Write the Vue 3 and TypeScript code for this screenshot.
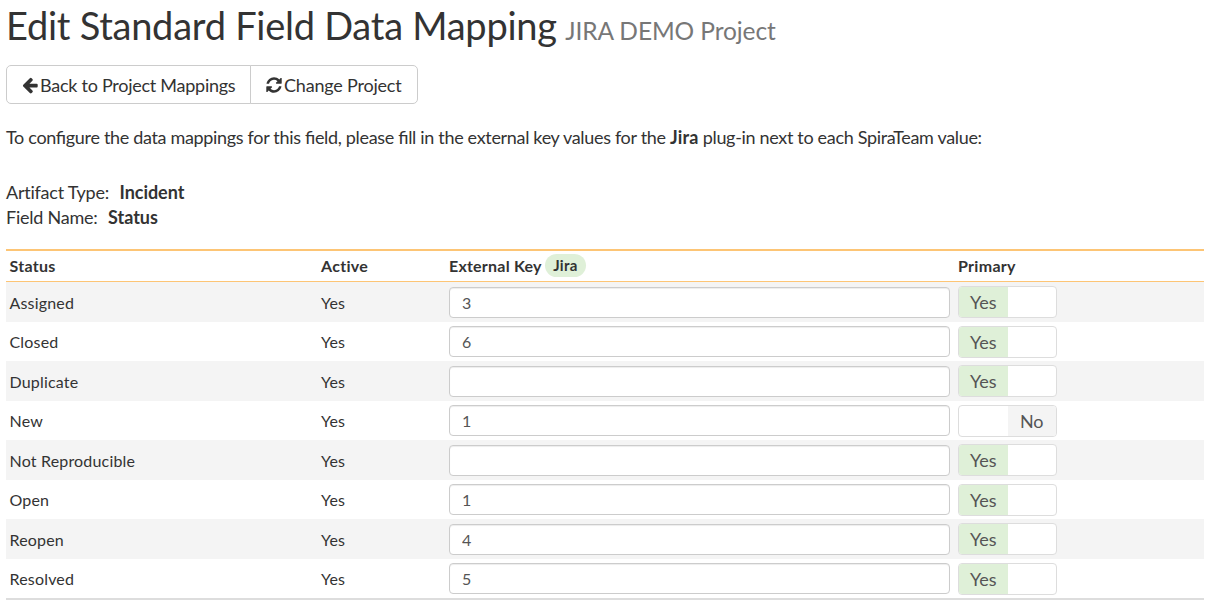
<script setup lang="ts">
import { ref } from 'vue'

interface StatusMapping {
  name: string
  active: boolean
  externalKey: string
  primary: boolean
}

const mappings = ref<StatusMapping[]>([
  { name: 'Assigned', active: true, externalKey: '3', primary: true },
  { name: 'Closed', active: true, externalKey: '6', primary: true },
  { name: 'Duplicate', active: true, externalKey: '', primary: true },
  { name: 'New', active: true, externalKey: '1', primary: false },
  { name: 'Not Reproducible', active: true, externalKey: '', primary: true },
  { name: 'Open', active: true, externalKey: '1', primary: true },
  { name: 'Reopen', active: true, externalKey: '4', primary: true },
  { name: 'Resolved', active: true, externalKey: '5', primary: true },
])
</script>

<template>
  <main class="page">
    <h1 class="title">Edit Standard Field Data Mapping <small class="project">JIRA DEMO Project</small></h1>

    <div class="toolbar">
      <button type="button" class="btn">
        <svg class="icon" viewBox="0 0 1792 1792" aria-hidden="true">
          <path d="M1664 896v128q0 53-32.5 90.5t-84.5 37.5h-704l293 294q38 36 38 90t-38 90l-75 76q-37 37-90 37-52 0-91-37l-651-652q-37-37-37-90 0-52 37-91l651-650q38-38 91-38 52 0 90 38l75 74q38 38 38 91t-38 91l-293 293h704q52 0 84.5 37.5t32.5 90.5z" />
        </svg>
        <span>Back to Project Mappings</span>
      </button>
      <button type="button" class="btn">
        <svg class="icon" viewBox="0 0 1792 1792" aria-hidden="true">
          <path d="M1639 1056q0 5-1 7-64 268-268 434.5t-478 166.5q-146 0-282.5-55t-243.5-157l-129 129q-19 19-45 19t-45-19-19-45v-448q0-26 19-45t45-19h448q26 0 45 19t19 45-19 45l-137 137q71 66 161 102t187 36q134 0 250-65t186-179q11-17 53-117 8-23 30-23h192q13 0 22.5 9.5t9.5 22.5zm25-800v448q0 26-19 45t-45 19h-448q-26 0-45-19t-19-45 19-45l138-138q-148-137-349-137-134 0-250 65t-186 179q-11 17-53 117-8 23-30 23h-199q-13 0-22.5-9.5t-9.5-22.5v-7q65-268 270-434.5t480-166.5q146 0 284 55.5t245 156.5l130-129q19-19 45-19t45 19 19 45z" />
        </svg>
        <span>Change Project</span>
      </button>
    </div>

    <p class="intro">To configure the data mappings for this field, please fill in the external key values for the <b>Jira</b> plug-in next to each SpiraTeam value:</p>

    <div class="meta">
      <div class="meta-row"><span>Artifact Type:</span><b>Incident</b></div>
      <div class="meta-row"><span>Field Name:</span><b>Status</b></div>
    </div>

    <section class="grid">
      <div class="row head">
        <div>Status</div>
        <div>Active</div>
        <div class="key-head"><span>External Key</span><span class="badge">Jira</span></div>
        <div>Primary</div>
      </div>
      <div v-for="item in mappings" :key="item.name" class="row">
        <div>{{ item.name }}</div>
        <div>{{ item.active ? 'Yes' : 'No' }}</div>
        <div><input v-model="item.externalKey" class="field" type="text" /></div>
        <div>
          <button type="button" class="toggle" @click="item.primary = !item.primary">
            <span class="half" :class="{ yes: item.primary }">{{ item.primary ? 'Yes' : '' }}</span>
            <span class="half" :class="{ no: !item.primary }">{{ item.primary ? '' : 'No' }}</span>
          </button>
        </div>
      </div>
    </section>
  </main>
</template>

<style>
body {
  margin: 0;
  background: #fff;
}
</style>

<style scoped>
.page {
  box-sizing: border-box;
  height: 609px;
  padding: 4px 10px 0 6px;
  overflow: hidden;
  font-family: Lato, 'Open Sans', sans-serif;
  font-size: 18px;
  line-height: 25px;
  color: #333;
}
.title {
  margin: 0;
  height: 43px;
  font-size: 38px;
  line-height: 43px;
  font-weight: 400;
  letter-spacing: -0.25px;
  white-space: nowrap;
}
.project {
  font-size: 24.5px;
  line-height: 1;
  letter-spacing: -0.1px;
  margin-left: -1px;
  color: #777;
}
.toolbar {
  display: flex;
  margin-top: 18px;
}
.btn {
  box-sizing: border-box;
  display: flex;
  align-items: center;
  height: 39px;
  padding: 1px 13.5px 0;
  border: 1px solid #ccc;
  background: #fff;
  color: #333;
  font: inherit;
  letter-spacing: -0.26px;
  white-space: nowrap;
}
.btn:first-child {
  width: 245px;
  border-radius: 5px 0 0 5px;
}
.btn:last-child {
  width: 168px;
  margin-left: -1px;
  border-radius: 0 5px 5px 0;
  letter-spacing: -0.2px;
}
.icon {
  flex: none;
  width: 18px;
  height: 18px;
  margin-right: 1.5px;
  fill: #333;
}
.intro {
  margin: 21px 0 0;
  letter-spacing: -0.325px;
  font-feature-settings: 'liga' 1;
  white-space: nowrap;
}
.intro b {
  letter-spacing: 0.15px;
}
.meta {
  margin-top: 30px;
}
.meta-row {
  display: flex;
  gap: 10.5px;
}
.meta-row span {
  letter-spacing: -0.23px;
}
.meta-row b {
  letter-spacing: -0.05px;
}
.grid {
  margin-top: 19px;
  border-top: 2px solid #fdc575;
  border-bottom: 2px solid #ddd;
  font-size: 16px;
  letter-spacing: 0.18px;
}
.row {
  box-sizing: border-box;
  display: grid;
  grid-template-columns: 311.5px 128px 509px 1fr;
  align-items: center;
  height: 39.5px;
  padding: 1px 0 0 3.5px;
}
.row:nth-child(even) {
  background: #f4f4f4;
}
.head {
  height: 31px;
  padding-top: 0;
  padding-bottom: 1px;
  border-bottom: 1px solid #fdc575;
  font-weight: 700;
  letter-spacing: 0.3px;
}
.key-head {
  display: flex;
  align-items: center;
  gap: 3px;
}
.key-head > span:first-child {
  letter-spacing: 0.22px;
}
.badge {
  height: 23px;
  padding: 0 8.5px;
  border-radius: 12px;
  background: #dff0d8;
  font-size: 15px;
  line-height: 22px;
}
.field {
  box-sizing: border-box;
  display: block;
  width: 501px;
  height: 31px;
  padding: 0 12px;
  border: 1px solid #ccc;
  border-radius: 4px;
  background: #fff;
  box-shadow: inset 0 1px 1px rgba(0, 0, 0, 0.075);
  color: #555;
  font: inherit;
}
.toggle {
  box-sizing: border-box;
  display: flex;
  width: 99px;
  height: 32px;
  padding: 0;
  overflow: hidden;
  border: 1px solid #ddd;
  border-radius: 4px;
  background: #fff;
  color: #555;
  font: inherit;
  font-size: 18px;
}
.half {
  flex: 1;
  line-height: 31px;
  text-align: center;
}
.yes {
  background: #dff0d8;
}
.no {
  background: #f4f4f4;
}
</style>
